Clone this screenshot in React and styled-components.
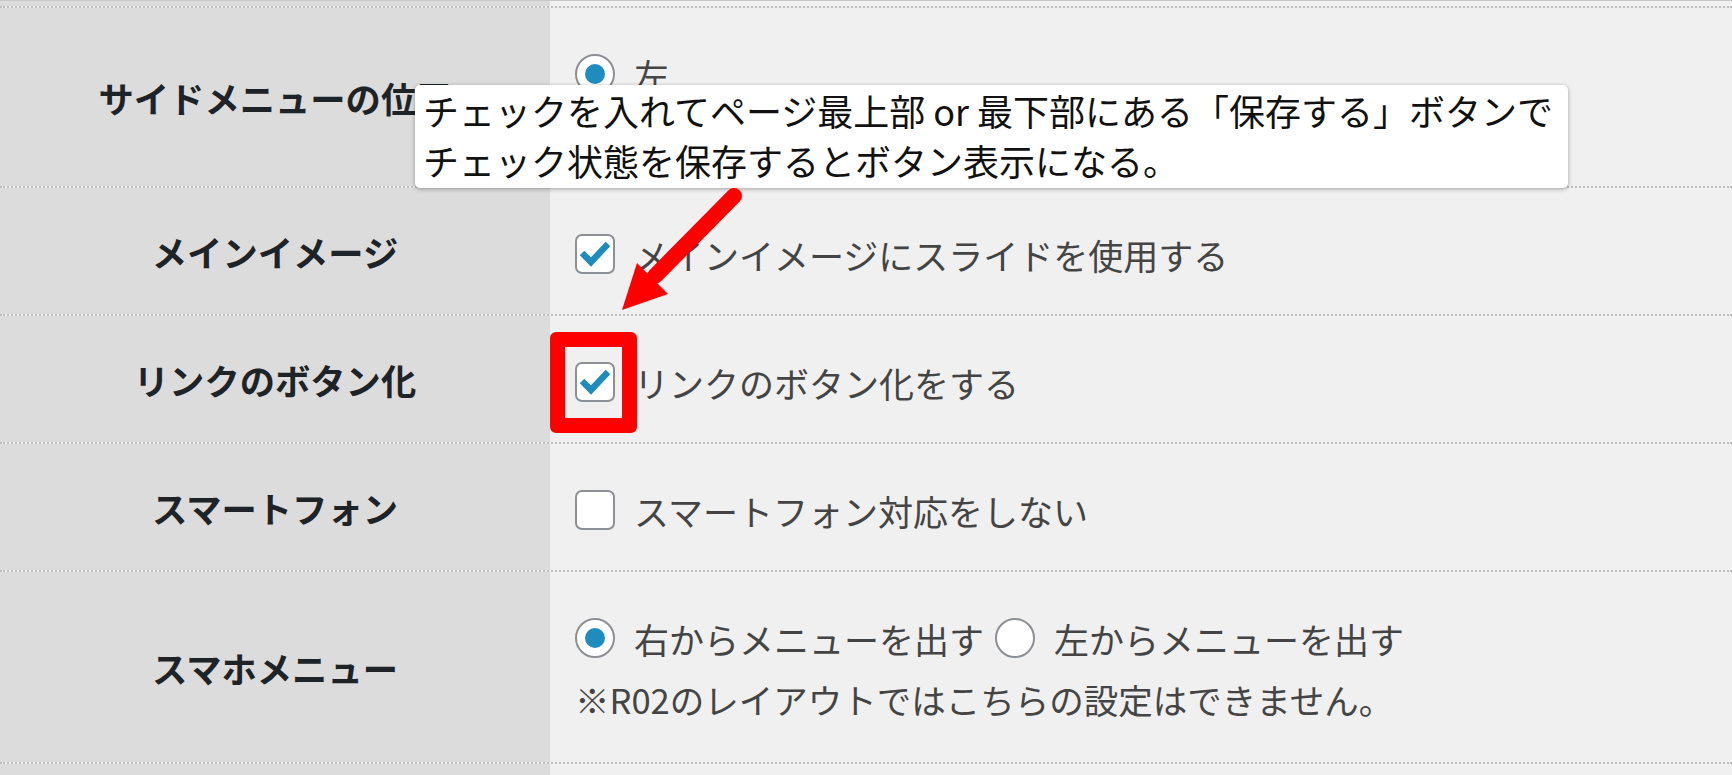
import React from 'react'
import styled, {createGlobalStyle} from 'styled-components'

const Global = createGlobalStyle`
  html, body {
    margin: 0;
    padding: 0;
    background: #f0f0f0;
  }
  body {
    font-family: 'Noto Sans CJK JP', 'Noto Sans', sans-serif;
  }
`
const Page = styled.div`
  position: relative;
  width: 1732px;
  height: 775px;
  overflow: hidden;
  background: #f0f0f0;
`
const Table = styled.div`
  border-top: 1px solid #c8c8c8;
`
const Row = styled.div`
  display: grid;
  grid-template-columns: 550px 1fr;
  height: ${(props) => props.$h ? props.$h + 'px' : 'auto'};
  border-bottom: ${(props) => props.$last ? 'none' : '2px dotted #bdbdbd'};
`
const Th = styled.div`
  background: #dcdcdc;
  display: flex;
  align-items: center;
  justify-content: center;
  font-size: 35.3px;
  font-weight: 700;
  color: #1d2327;
  white-space: nowrap;
`
const Td = styled.div`
  display: flex;
  flex-direction: column;
  padding: ${(props) => props.$empty ? '0' : '43px 0 37px 25px'};
`
const Line = styled.div`
  display: flex;
  align-items: center;
  height: 46px;
  margin-top: ${(props) => props.$gap || 0}px;
`
const Option = styled.label`
  display: flex;
  align-items: center;
  margin-right: 11px;
  font-size: 35px;
  color: #444;
  white-space: nowrap;
`
const Box = styled.span`
  box-sizing: border-box;
  width: 40px;
  height: 40px;
  margin-right: 19px;
  border: 2px solid #8c8f94;
  border-radius: ${(props) => props.$round ? '50%' : '7px'};
  background: #fff;
  display: flex;
  align-items: center;
  justify-content: center;
  flex-shrink: 0;
`
const Dot = styled.span`
  width: 20px;
  height: 20px;
  border-radius: 50%;
  background: #1e8cbe;
`
const Note = styled.div`
  margin-top: 12px;
  font-size: 34.5px;
  line-height: 52px;
  color: #444;
  white-space: nowrap;
`
const Tooltip = styled.div`
  position: absolute;
  left: 415px;
  top: 85px;
  width: 1153px;
  height: 103px;
  box-sizing: border-box;
  padding-left: 8px;
  background: #fff;
  border-radius: 5px;
  box-shadow: 0 1px 4px rgba(0, 0, 0, 0.35);
  font-size: 36px;
  line-height: 50px;
  color: #111;
  white-space: nowrap;
`
const Highlight = styled.div`
  position: absolute;
  left: 550px;
  top: 332px;
  width: 87px;
  height: 101px;
  box-sizing: border-box;
  border: 15px solid #ff0000;
  border-radius: 6px;
`
const Overlay = styled.svg`
  position: absolute;
  left: 0;
  top: 0;
  pointer-events: none;
`

const Check = () => (
  <svg width="30" height="26" viewBox="0 0 30 26">
    <path d="M2 12 L11 21 L28 3" fill="none" stroke="#1e8cbe" strokeWidth="6.5" />
  </svg>
)

const CheckOption = ({checked, children}) => (
  <Option>
    <Box>{checked && <Check />}</Box>
    {children}
  </Option>
)

const RadioOption = ({checked, children}) => (
  <Option>
    <Box $round>{checked && <Dot />}</Box>
    {children}
  </Option>
)

export default function App() {
  return (
    <Page>
      <Global />
      <Table>
        <Row $h={5}><Th /><Td $empty /></Row>
        <Row>
          <Th>サイドメニューの位置</Th>
          <Td>
            <Line><RadioOption checked>左</RadioOption></Line>
            <Line $gap={6}><RadioOption>右</RadioOption></Line>
          </Td>
        </Row>
        <Row>
          <Th>メインイメージ</Th>
          <Td>
            <Line><CheckOption checked>メインイメージにスライドを使用する</CheckOption></Line>
          </Td>
        </Row>
        <Row>
          <Th>リンクのボタン化</Th>
          <Td>
            <Line><CheckOption checked>リンクのボタン化をする</CheckOption></Line>
          </Td>
        </Row>
        <Row>
          <Th>スマートフォン</Th>
          <Td>
            <Line><CheckOption>スマートフォン対応をしない</CheckOption></Line>
          </Td>
        </Row>
        <Row>
          <Th>スマホメニュー</Th>
          <Td>
            <Line>
              <RadioOption checked>右からメニューを出す</RadioOption>
              <RadioOption>左からメニューを出す</RadioOption>
            </Line>
            <Note>※R02のレイアウトではこちらの設定はできません。</Note>
          </Td>
        </Row>
        <Row $h={14} $last><Th /><Td $empty /></Row>
      </Table>

      <Tooltip>
        チェックを入れてページ最上部 or 最下部にある「保存する」ボタンで<br />
        チェック状態を保存するとボタン表示になる。
      </Tooltip>

      <Highlight />

      <Overlay width="1732" height="775" viewBox="0 0 1732 775">
        <line x1="734" y1="196" x2="655" y2="276" stroke="#ff0000" strokeWidth="16" strokeLinecap="round" />
        <polygon points="622,310 637,263 668,294" fill="#ff0000" />
      </Overlay>
    </Page>
  )
}
